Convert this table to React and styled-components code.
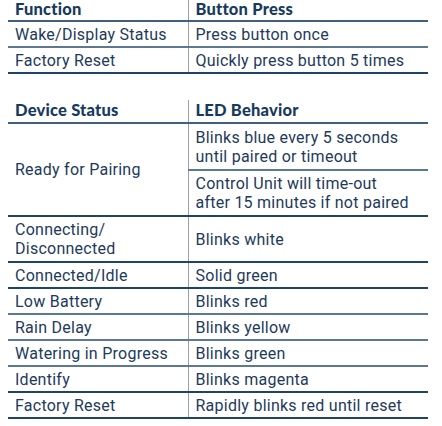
import styled, { createGlobalStyle } from 'styled-components';

const GlobalStyle = createGlobalStyle`
  html, body {
    margin: 0;
    padding: 0;
    background: #ffffff;
  }
`;

const Page = styled.div`
  padding: 0 14px 0 8px;
  width: 420px;
  font-family: Roboto, "Liberation Sans", sans-serif;
  color: #1d3a5c;
`;

const Table = styled.table`
  width: 420px;
  border-collapse: collapse;
  table-layout: fixed;
  margin-top: ${({ $top }) => $top || 0}px;
`;

const HeadCell = styled.th`
  text-align: left;
  font-family: Lato, "Open Sans", sans-serif;
  font-weight: 900;
  font-size: 16.5px;
  line-height: 17px;
  letter-spacing: 0.2px;
  color: #173a5e;
  height: ${({ $h }) => $h || 19}px;
  padding: 0 7px ${({ $pb }) => $pb ?? 3}px;
  vertical-align: bottom;
  border-bottom: 2px solid #3f6080;
  border-left: ${({ $divider }) => ($divider ? '1.5px solid #97a3b0' : 'none')};
  box-sizing: border-box;
  white-space: nowrap;
`;

const Cell = styled.td`
  font-size: 16px;
  letter-spacing: 0.25px;
  line-height: 19px;
  height: ${({ $h }) => $h || 26}px;
  padding: 0 7px;
  vertical-align: middle;
  border-bottom: 2px solid ${({ $light }) => ($light ? '#5c7894' : '#1f4466')};
  border-left: ${({ $divider }) => ($divider ? '1.5px solid #97a3b0' : 'none')};
  box-sizing: border-box;
  white-space: nowrap;
`;

const functions = [
  ['Wake/Display Status', 'Press button once'],
  ['Factory Reset', 'Quickly press button 5 times'],
];

const statuses = [
  ['Connected/Idle', 'Solid green'],
  ['Low Battery', 'Blinks red'],
  ['Rain Delay', 'Blinks yellow'],
  ['Watering in Progress', 'Blinks green'],
  ['Identify', 'Blinks magenta'],
  ['Factory Reset', 'Rapidly blinks red until reset'],
];

export default function App() {
  return (
    <>
      <GlobalStyle />
      <Page>
        <Table>
          <colgroup>
            <col style={{ width: 180 }} />
            <col />
          </colgroup>
          <thead>
            <tr>
              <HeadCell $h={21} $pb={2}>Function</HeadCell>
              <HeadCell $h={21} $pb={2} $divider>Button Press</HeadCell>
            </tr>
          </thead>
          <tbody>
            {functions.map(([f, b], i) => (
              <tr key={f}>
                <Cell $light={i === 0}>{f}</Cell>
                <Cell $light={i === 0} $divider>{b}</Cell>
              </tr>
            ))}
          </tbody>
        </Table>

        <Table $top={26}>
          <colgroup>
            <col style={{ width: 180 }} />
            <col />
          </colgroup>
          <thead>
            <tr>
              <HeadCell $h={23}>Device Status</HeadCell>
              <HeadCell $h={23} $divider>LED Behavior</HeadCell>
            </tr>
          </thead>
          <tbody>
            <tr>
              <Cell rowSpan={2}>Ready for Pairing</Cell>
              <Cell $h={47} $divider $light>
                Blinks blue every 5 seconds
                <br />
                until paired or timeout
              </Cell>
            </tr>
            <tr>
              <Cell $h={46} $divider>
                Control Unit will time-out
                <br />
                after 15 minutes if not paired
              </Cell>
            </tr>
            <tr>
              <Cell $h={46}>
                Connecting/
                <br />
                Disconnected
              </Cell>
              <Cell $h={46} $divider>Blinks white</Cell>
            </tr>
            {statuses.map(([s, l], i) => (
              <tr key={s}>
                <Cell $light={i > 0 && i < 4}>{s}</Cell>
                <Cell $light={i > 0 && i < 4} $divider>{l}</Cell>
              </tr>
            ))}
          </tbody>
        </Table>
      </Page>
    </>
  );
}
